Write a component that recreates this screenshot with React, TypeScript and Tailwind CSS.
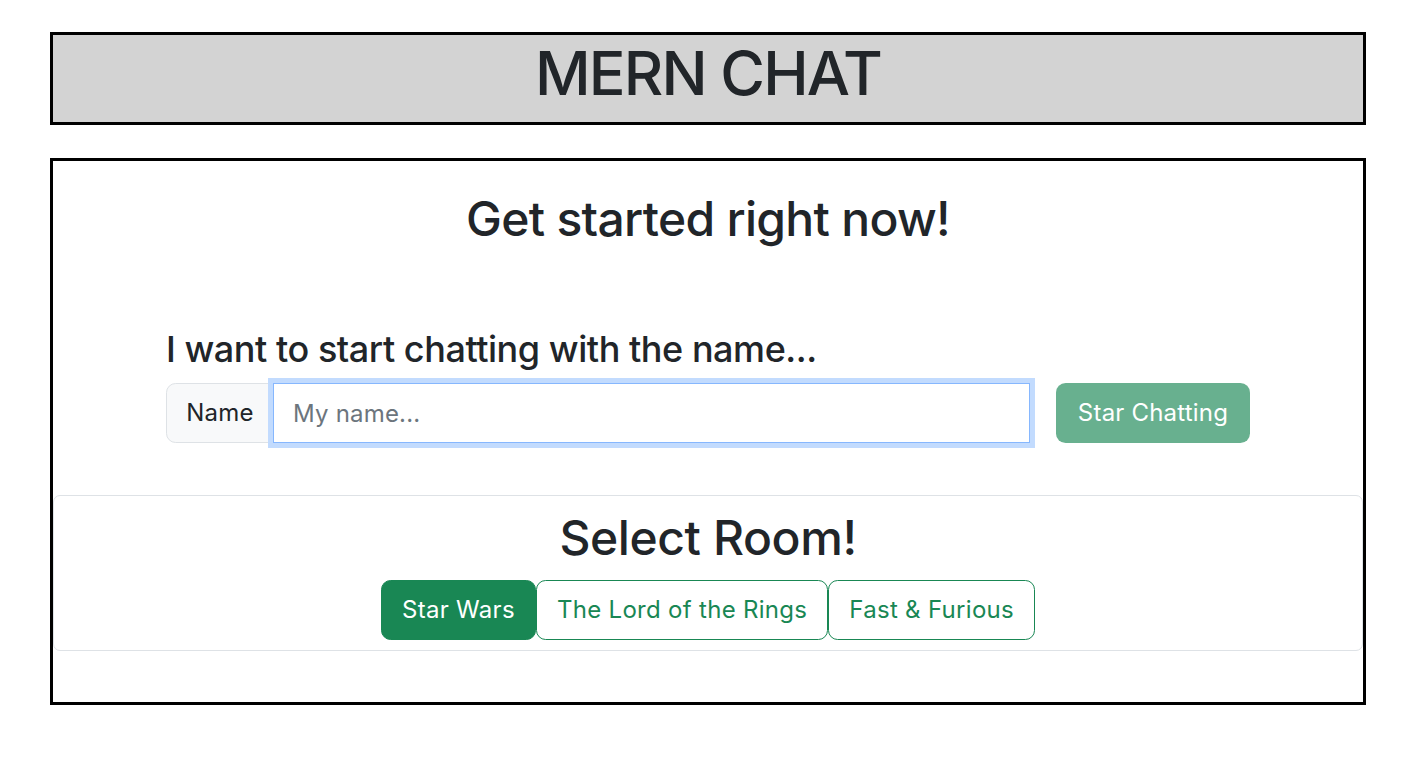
import React from "react";

const rooms = ["Star Wars", "The Lord of the Rings", "Fast & Furious"];

export default function App() {
  const active = "Star Wars";

  return (
    <div className="min-h-screen bg-white pl-[50px] pt-[32px] text-[#212529] font-['Inter','Liberation_Sans',sans-serif]">
      <div className="w-[1316px]">
        <header className="h-[93px] border-[3px] border-black bg-[#d3d3d3] pt-px">
          <h1 className="text-center text-[61px] font-medium leading-[74px] tracking-[-1.8px]">MERN CHAT</h1>
        </header>

        <main className="mt-[33px] h-[547px] border-[3px] border-black pt-[29px]">
          <h1 className="text-center text-[48px] font-medium leading-[58px] tracking-[-0.7px]">Get started right now!</h1>

          <div className="mx-auto mt-[80px] w-[1084px]">
            <h3 className="text-[36px] font-medium leading-[42px] tracking-[-0.45px]">
              I want to start chatting with the name...
            </h3>
            <div className="mt-[13px] flex items-center gap-[26px]">
              <div className="flex flex-1">
                <span className="flex h-[60px] w-[108px] items-center justify-center rounded-l-[9.6px] border border-[#dee2e6] bg-[#f8f9fa] text-[24px] tracking-[0.2px]">
                  Name
                </span>
                <input
                  autoFocus
                  placeholder="My name..."
                  className="-ml-px h-[60px] flex-1 border border-[#86b7fe] px-[19px] text-[24px] tracking-[0.2px] text-[#212529] outline-none shadow-[0_0_0_5px_#c2dbfe] placeholder:text-[#6c757d]"
                />
              </div>
              <button className="h-[60px] w-[194px] rounded-[9.6px] bg-[#198754] text-[24px] tracking-[0.2px] text-white opacity-65">
                Star Chatting
              </button>
            </div>
          </div>

          <section className="mt-[52px] h-[156px] rounded-[7px] border border-[#dee2e6] pt-[13px]">
            <h1 className="text-center text-[48px] font-medium leading-[58px] tracking-[-0.4px]">Select Room!</h1>
            <div className="mt-[13px] flex justify-center">
              {rooms.map((room) => (
                <button
                  key={room}
                  className={
                    room === active
                      ? "h-[60px] rounded-[9.6px] border border-[#198754] bg-[#198754] px-[20px] text-[24px] tracking-[0.3px] text-white"
                      : "h-[60px] rounded-[9.6px] border border-[#198754] bg-white px-[20px] text-[24px] tracking-[0.3px] text-[#198754]"
                  }
                >
                  {room}
                </button>
              ))}
            </div>
          </section>
        </main>
      </div>
    </div>
  );
}
